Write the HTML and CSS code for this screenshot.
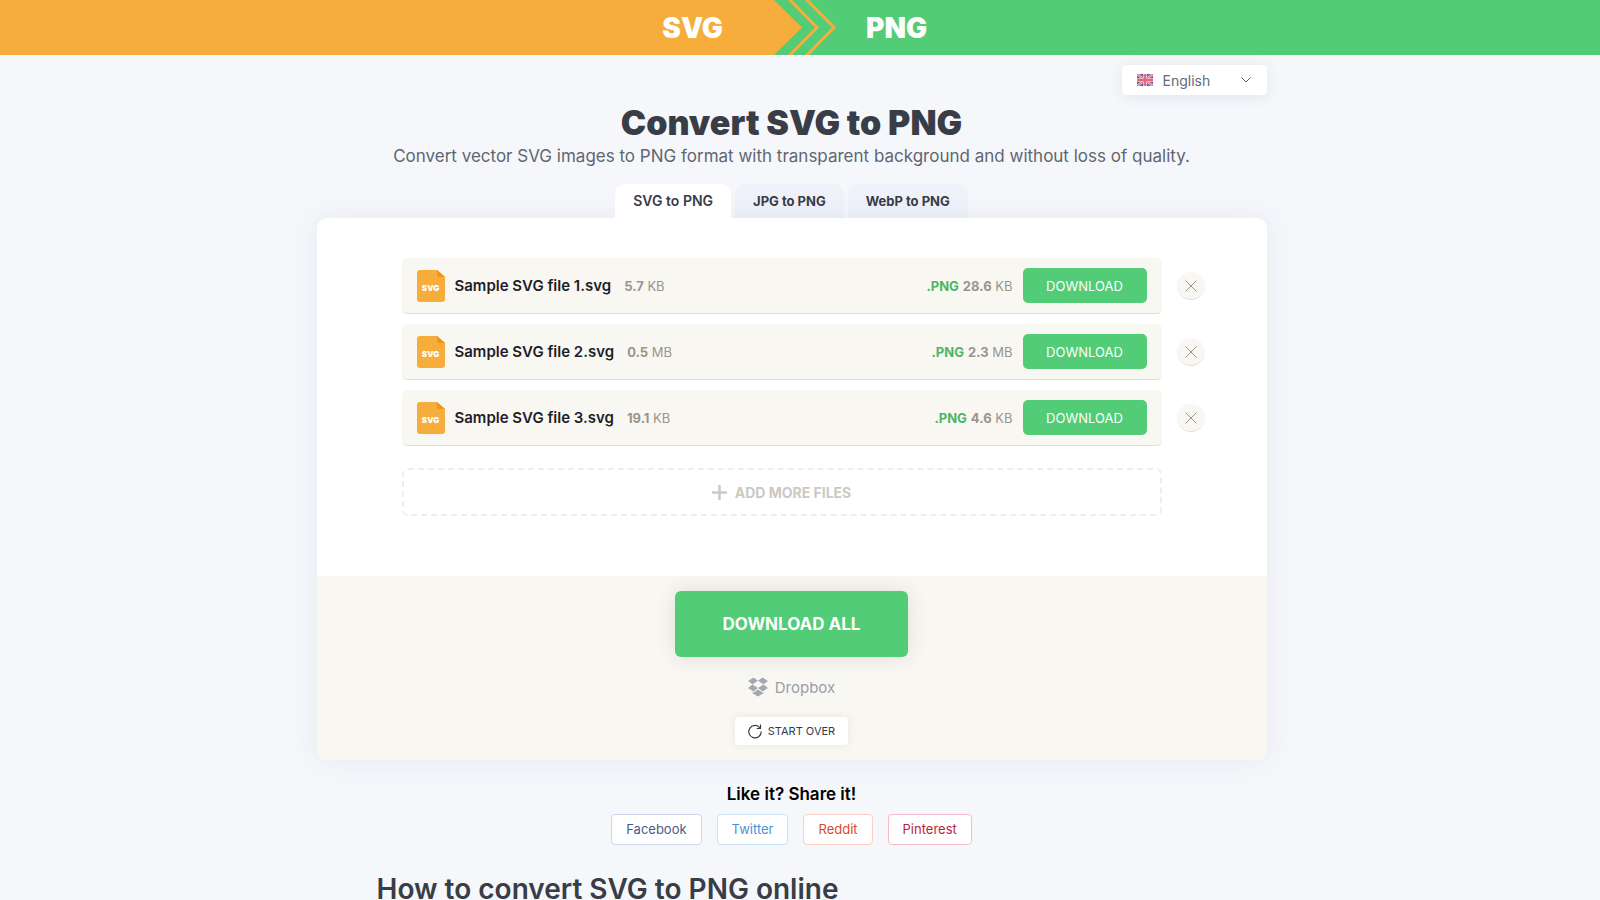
FILE: index.html
```html
<!DOCTYPE html>
<html lang="en">
<head>
  <meta charset="UTF-8">
  <meta name="viewport" content="width=device-width, initial-scale=1.0">
  <title>SVG to PNG</title>
  <link rel="stylesheet" href="styles.css">
</head>
<body>
  <svg class="sprite" aria-hidden="true">
    <symbol id="file" viewBox="0 0 28 32">
      <path fill="#f6ad3b" d="M3 0h17l8 7v22a3 3 0 0 1-3 3H3a3 3 0 0 1-3-3V3a3 3 0 0 1 3-3z"/>
      <path fill="#f3960f" d="M20 0l8 7h-6a2 2 0 0 1-2-2z"/>
    </symbol>
    <symbol id="cross" viewBox="0 0 12 12">
      <path fill="none" stroke="#99958a" d="M.5.5l11 11M11.5.5l-11 11"/>
    </symbol>
  </svg>

  <header class="header">
    <div class="header-from">SVG</div>
    <svg class="header-arrows" width="66" height="55" viewBox="0 0 66 55">
      <path fill="#f6ad3b" d="M0 0h2l28 27.500L2 55H0z"/>
      <path fill="none" stroke="#f6ad3b" stroke-width="3" d="M16-2l29 29.500L16 57M33-2l29 29.500L33 57"/>
    </svg>
    <div class="header-to">PNG</div>
  </header>

  <div class="page">
    <div class="container">
      <div class="lang-row">
        <button class="lang" type="button">
          <svg width="16" height="12" viewBox="0 0 16 12">
            <path fill="#5b639f" d="M0 0h16v12H0z"/>
            <path stroke="#ecc5d3" stroke-width="2.500" d="M0 0l16 12M16 0L0 12"/>
            <path stroke="#e0708a" d="M0 0l16 12M16 0L0 12"/>
            <path stroke="#ecc5d3" stroke-width="4" d="M8 0v12M0 6h16"/>
            <path stroke="#e5687c" stroke-width="2.400" d="M8 0v12M0 6h16"/>
          </svg>
          <span class="lang-name">English</span>
          <svg width="10" height="6" viewBox="0 0 10 6"><path fill="none" stroke="#555c6b" d="M.5.5L5 5 9.500.5"/></svg>
        </button>
      </div>

      <h1>Convert SVG to PNG</h1>
      <p class="subtitle">Convert vector SVG images to PNG format with transparent background and without loss of quality.</p>

      <nav class="tabs">
        <a class="tab active" href="#">SVG to PNG</a>
        <a class="tab" href="#">JPG to PNG</a>
        <a class="tab" href="#">WebP to PNG</a>
      </nav>

      <main class="card">
        <div class="files">
          <div class="file-row">
            <div class="file">
              <span class="file-icon"><svg width="28" height="32"><use href="#file"/></svg><span class="file-ext">SVG</span></span>
              <span class="file-name">Sample SVG file 1.svg</span>
              <span class="file-size"><b>5.7</b> KB</span>
              <span class="result"><b class="result-type">.PNG</b><b>28.6</b> KB</span>
              <button class="download" type="button">DOWNLOAD</button>
            </div>
            <button class="remove" type="button" aria-label="Remove"><svg width="12" height="12"><use href="#cross"/></svg></button>
          </div>
          <div class="file-row">
            <div class="file">
              <span class="file-icon"><svg width="28" height="32"><use href="#file"/></svg><span class="file-ext">SVG</span></span>
              <span class="file-name">Sample SVG file 2.svg</span>
              <span class="file-size"><b>0.5</b> MB</span>
              <span class="result"><b class="result-type">.PNG</b><b>2.3</b> MB</span>
              <button class="download" type="button">DOWNLOAD</button>
            </div>
            <button class="remove" type="button" aria-label="Remove"><svg width="12" height="12"><use href="#cross"/></svg></button>
          </div>
          <div class="file-row">
            <div class="file">
              <span class="file-icon"><svg width="28" height="32"><use href="#file"/></svg><span class="file-ext">SVG</span></span>
              <span class="file-name">Sample SVG file 3.svg</span>
              <span class="file-size"><b>19.1</b> KB</span>
              <span class="result"><b class="result-type">.PNG</b><b>4.6</b> KB</span>
              <button class="download" type="button">DOWNLOAD</button>
            </div>
            <button class="remove" type="button" aria-label="Remove"><svg width="12" height="12"><use href="#cross"/></svg></button>
          </div>
          <button class="add" type="button">
            <svg width="15" height="15" viewBox="0 0 15 15"><path stroke="#cbc9c1" stroke-width="2.500" d="M7.500 0v15M0 7.500h15"/></svg>
            ADD MORE FILES
          </button>
        </div>

        <div class="actions">
          <button class="download-all" type="button">DOWNLOAD ALL</button>
          <button class="dropbox" type="button">
            <svg width="20" height="20" viewBox="0 0 20 20">
              <path fill="#a3a7b0" d="M5.500.5L10 3.800 4.500 7.200 0 4zM14.500.5L20 4l-4.500 3.200L10 3.800zM0 11l4.500-3.400L10 11l-4.500 3.400zM15.500 7.600L20 11l-5.500 3.400L10 11zM4.500 15.200l1.200.4L10 12.400l4.300 3.200 1.200-.4v1.100L10 19.600l-5.500-3.300z"/>
            </svg>
            Dropbox
          </button>
          <button class="start-over" type="button">
            <svg width="14" height="15" viewBox="0 0 14 15"><path fill="none" stroke="#343a46" stroke-width="1.200" d="M12 4A6.200 6.200 0 1 0 13.200 7.600M12.500.5v4H8.700"/></svg>
            START OVER
          </button>
        </div>
      </main>

      <section class="share">
        <div class="share-title">Like it? Share it!</div>
        <div class="share-links">
          <a class="share-link facebook" href="#">Facebook</a>
          <a class="share-link twitter" href="#">Twitter</a>
          <a class="share-link reddit" href="#">Reddit</a>
          <a class="share-link pinterest" href="#">Pinterest</a>
        </div>
      </section>

      <h2>How to convert SVG to PNG online</h2>
    </div>
  </div>
</body>
</html>
```
FILE: styles.css
```css
* { box-sizing: border-box; }
html { overflow-x: hidden; }
body { margin: 0; background: #f5f7fb; color: #383d48; font-family: Inter, "Open Sans", sans-serif; font-size: 14px; }
button { border: 0; padding: 0; background: none; font-family: inherit; cursor: pointer; }
a { text-decoration: none; }
svg { display: block; flex: none; }
.sprite { position: absolute; width: 0; height: 0; }

/* top bar */
.header { display: flex; height: 55px; background: #52cc76; color: white; font-size: 28px; font-weight: 900; line-height: 56px; }
.header-from { width: calc(50% - 28px); padding-right: 49px; background: #f6ad3b; text-align: right; }
.header-to { padding-left: 28px; }

.page { padding: 10px 17px 0 0; }
.container { max-width: 950px; margin: 0 auto; }
.lang-row { display: flex; justify-content: flex-end; }
.lang { display: flex; align-items: center; width: 145px; height: 30px; padding: 0 16px 0 15px; background: white; border-radius: 4px; box-shadow: 0 2px 14px rgba(60, 70, 100, 0.1); color: #646b7d; font-size: 14px; }
.lang-name { margin: 0 auto 0 10px; }

h1 { margin: 8px 0 0; font-size: 34px; font-weight: 900; line-height: 40px; text-align: center; }
.subtitle { margin: 2px 0 17px; color: #606671; font-size: 17px; font-weight: 400; line-height: 22px; text-align: center; }

.tabs { display: flex; justify-content: center; gap: 4px; }
.tab { height: 34px; padding: 0 18px; background: #eff2f9; border-radius: 10px 10px 0 0; color: #383d48; font-size: 13px; font-weight: 700; line-height: 34px; }
.tab.active { position: relative; z-index: 1; background: white; font-size: 14px; font-weight: 600; }

/* converter */
.card { position: relative; background: white; border-radius: 10px; box-shadow: 0 0 30px rgba(70, 80, 110, 0.08); }
.files { padding: 40px 62px 60px 85px; }
.file-row { display: grid; grid-template-columns: 1fr 28px; align-items: center; gap: 15px; margin-bottom: 10px; }
.file { display: flex; align-items: center; height: 56px; padding: 0 15px; background: #f9f7f2; border-bottom: 1px solid #e2dfd5; border-radius: 5px; }
.file-icon { position: relative; }
.file-ext { position: absolute; top: 12px; left: 0; width: 28px; color: white; font-size: 8px; font-weight: 900; line-height: 12px; text-align: center; }
.file-name { margin: 0 13px 0 10px; color: #1d1e28; font-size: 15px; font-weight: 600; }
.file-size, .result { color: #99958a; font-size: 13px; }
.result { margin: 0 10px 0 auto; }
.result-type { margin-right: 4px; color: #4cb564; }
.download { width: 124px; height: 35px; background: #52cc76; border-radius: 5px; color: white; font-size: 13px; }
.remove { display: flex; align-items: center; justify-content: center; width: 28px; height: 28px; background: #f9f7f2; border-bottom: 1px solid #e2dfd5; border-radius: 50%; }
.add { display: flex; align-items: center; justify-content: center; gap: 8px; width: calc(100% - 43px); height: 48px; margin-top: 22px; border: 2px dashed #efeeea; border-radius: 6px; color: #cbc9c1; font-size: 14px; font-weight: 700; }

.actions { display: flex; flex-direction: column; align-items: center; padding: 15px 0; background: #f9f7f2; border-radius: 0 0 10px 10px; }
.download-all { width: 233px; height: 66px; background: #52cc76; border-radius: 6px; box-shadow: 0 0 20px rgba(80, 70, 50, 0.14); color: white; font-size: 17px; font-weight: 700; }
.dropbox { display: flex; align-items: center; gap: 7px; height: 20px; margin: 20px 0; color: #9a9ea8; font-size: 15px; }
.start-over { display: flex; align-items: center; justify-content: center; gap: 6px; width: 113px; height: 28px; background: white; border-radius: 4px; box-shadow: 0 0 8px rgba(80, 70, 50, 0.1); color: #343a46; font-size: 11px; }

.share { padding-top: 24px; text-align: center; }
.share-title { color: black; font-size: 17px; font-weight: 600; line-height: 20px; }
.share-links { display: flex; justify-content: center; gap: 15px; margin-top: 10px; }
.share-link { padding: 0 14px; background: white; border: 1px solid; border-radius: 4px; font-size: 13px; line-height: 29px; }
.facebook { border-color: #cdd5e8; color: #4c5a88; }
.twitter { border-color: #c8e3f8; color: #4a90d9; }
.reddit { border-color: #fbcfc3; color: #d9482b; }
.pinterest { border-color: #f3bcc8; color: #b91f3c; }

h2 { margin: 28px 60px 0; font-size: 28px; font-weight: 600; line-height: 32px; }
```
